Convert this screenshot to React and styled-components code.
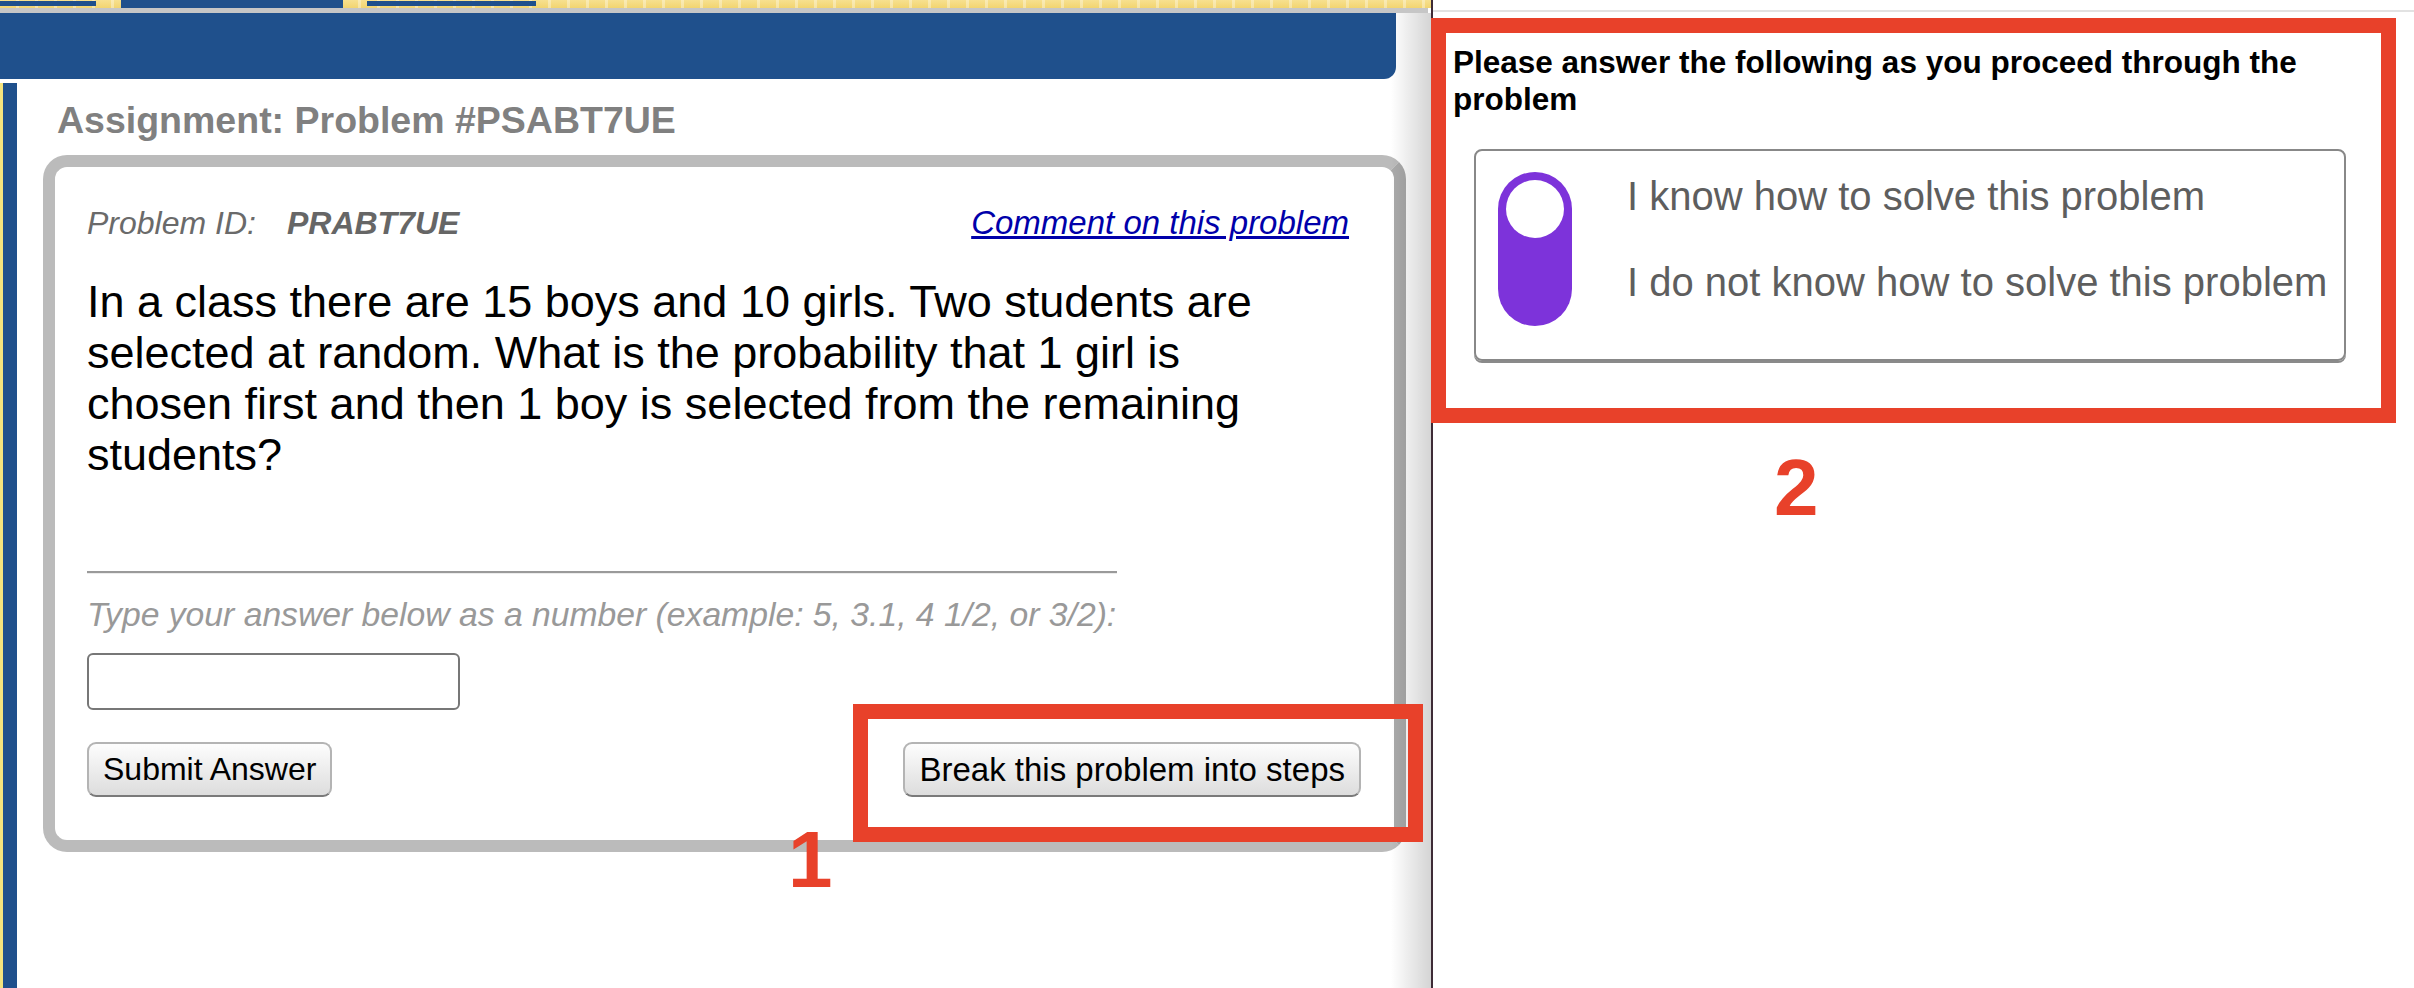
import React from "react";
import styled, { createGlobalStyle } from "styled-components";

const GlobalStyle = createGlobalStyle`
  html, body {
    margin: 0;
    padding: 0;
    background: #fff;
  }
  body {
    font-family: "Liberation Sans", Arial, sans-serif;
  }
`;

function App() {
  return (
    <>
      <GlobalStyle />
      <Page>
        <LeftPane>
          <TopStrip>
            <Tab $w={96} $h={5} $mt={1} $ml={0} />
            <Tab $w={222} $h={9} $mt={0} $ml={25} />
            <Tab $w={169} $h={5} $mt={1} $ml={24} />
          </TopStrip>
          <GrayRule />
          <Header />
          <Body>
            <SideBar />
            <Main>
              <AssignmentTitle>Assignment: Problem #PSABT7UE</AssignmentTitle>
              <Card>
                <TopRow>
                  <ProblemId>
                    Problem ID:<IdValue>PRABT7UE</IdValue>
                  </ProblemId>
                  <CommentLink href="#">Comment on this problem</CommentLink>
                </TopRow>
                <ProblemText>
                  In a class there are 15 boys and 10 girls. Two students are<br />
                  selected at random. What is the probability that 1 girl is<br />
                  chosen first and then 1 boy is selected from the remaining<br />
                  students?
                </ProblemText>
                <Rule />
                <Hint>
                  Type your answer below as a number (example: 5, 3.1, 4 1/2, or 3/2):
                </Hint>
                <AnswerInput type="text" />
                <ButtonRow>
                  <PlainButton $size={32}>Submit Answer</PlainButton>
                  <PlainButton $size={33}>Break this problem into steps</PlainButton>
                </ButtonRow>
                <MarkBox $left={798} $top={537} $w={570} $h={138} />
                <MarkNumber $left={733} $top={653}>1</MarkNumber>
              </Card>
            </Main>
          </Body>
        </LeftPane>

        <RightPane>
          <RightInner>
            <Prompt>
              Please answer the following as you proceed through the problem
            </Prompt>
            <OptionBox>
              <Toggle>
                <Knob />
              </Toggle>
              <Options>
                <Option>I know how to solve this problem</Option>
                <Option>I do not know how to solve this problem</Option>
              </Options>
            </OptionBox>
          </RightInner>
          <MarkBox $left={-2} $top={18} $w={965} $h={405} />
          <MarkNumber $left={341} $top={448}>2</MarkNumber>
        </RightPane>
      </Page>
    </>
  );
}

const Page = styled.div`
  display: flex;
  width: 2414px;
  height: 988px;
  overflow: hidden;
  background: #fff;
`;

const LeftPane = styled.div`
  position: relative;
  width: 1431px;
  flex-shrink: 0;
  display: flex;
  flex-direction: column;

  &::after {
    content: "";
    position: absolute;
    top: 13px;
    right: 0;
    bottom: 0;
    width: 40px;
    background: linear-gradient(to right, rgba(0, 0, 0, 0), rgba(0, 0, 0, 0.17));
    pointer-events: none;
  }
`;

const TopStrip = styled.div`
  display: flex;
  align-items: flex-start;
  height: 8px;
  background:
    repeating-linear-gradient(
      to right,
      rgba(255, 255, 255, 0) 0px,
      rgba(255, 255, 255, 0) 16px,
      rgba(255, 255, 255, 0.35) 16px,
      rgba(255, 255, 255, 0.35) 19px
    ),
    linear-gradient(to bottom, #f7e08f, #f2d470);
`;

const Tab = styled.div`
  width: ${(p) => p.$w}px;
  height: ${(p) => p.$h}px;
  margin-top: ${(p) => p.$mt}px;
  margin-left: ${(p) => p.$ml}px;
  background: #1f508c;
`;

const GrayRule = styled.div`
  width: 1428px;
  height: 5px;
  background: #c6c6c6;
`;

const Header = styled.div`
  width: 1396px;
  height: 66px;
  background: #1f508c;
  border-bottom-right-radius: 12px;
`;

const Body = styled.div`
  flex: 1;
  display: flex;
  margin-top: 4px;
`;

const SideBar = styled.div`
  width: 14px;
  border-left: 3px solid #f3e37e;
  background: #1f508c;
`;

const Main = styled.div`
  padding-left: 26px;
  display: flex;
  flex-direction: column;
  align-items: flex-start;
`;

const AssignmentTitle = styled.h1`
  margin: 15px 0 0 14px;
  font-family: "Liberation Sans", Arial, sans-serif;
  font-size: 37.5px;
  line-height: 44px;
  font-weight: 700;
  color: #808080;
`;

const Card = styled.div`
  position: relative;
  box-sizing: border-box;
  width: 1363px;
  margin-top: 13px;
  padding: 36px 33px 43px 32px;
  border: 12px solid #bbbbbb;
  border-right-color: #aaaaaa;
  border-radius: 24px;
  background: #fff;
  display: flex;
  flex-direction: column;
  align-items: flex-start;
`;

const TopRow = styled.div`
  align-self: stretch;
  display: flex;
  justify-content: space-between;
  align-items: baseline;
  padding-right: 12px;
`;

const ProblemId = styled.div`
  font-size: 32px;
  line-height: 40px;
  font-style: italic;
  color: #6a6a6a;
`;

const IdValue = styled.span`
  margin-left: 31px;
  font-weight: 700;
  color: #666;
`;

const CommentLink = styled.a`
  font-size: 33px;
  line-height: 40px;
  font-style: italic;
  color: #0000aa;
  text-decoration: underline;
`;

const ProblemText = styled.p`
  margin: 33px 0 0;
  font-size: 45px;
  line-height: 51px;
  color: #000;
  white-space: nowrap;
`;

const Rule = styled.div`
  width: 1030px;
  margin-top: 91px;
  border-top: 2px solid #9a9a9a;
  border-bottom: 1px solid #ececec;
`;

const Hint = styled.div`
  margin-top: 20px;
  font-size: 33.7px;
  line-height: 40px;
  font-style: italic;
  color: #999;
`;

const AnswerInput = styled.input`
  box-sizing: border-box;
  width: 373px;
  height: 57px;
  margin-top: 19px;
  border: 2px solid #777;
  border-radius: 6px;
  background: #fff;
  outline: none;
`;

const ButtonRow = styled.div`
  align-self: stretch;
  display: flex;
  justify-content: space-between;
  margin-top: 32px;
`;

const PlainButton = styled.button`
  box-sizing: border-box;
  height: 55px;
  padding: 0 14px;
  font-family: "Liberation Sans", Arial, sans-serif;
  font-size: ${(p) => p.$size}px;
  color: #000;
  border: 2px solid #b4b4b4;
  border-bottom-color: #7a7a7a;
  border-radius: 9px;
  background: linear-gradient(to bottom, #fdfdfd 0%, #ededed 50%, #dddddd 100%);
  cursor: pointer;
`;

const MarkBox = styled.div`
  position: absolute;
  left: ${(p) => p.$left}px;
  top: ${(p) => p.$top}px;
  width: ${(p) => p.$w}px;
  height: ${(p) => p.$h}px;
  box-sizing: border-box;
  border: 15px solid #e8412a;
  pointer-events: none;
  z-index: 2;
`;

const MarkNumber = styled.div`
  position: absolute;
  left: ${(p) => p.$left}px;
  top: ${(p) => p.$top}px;
  font-family: "Liberation Sans", Arial, sans-serif;
  font-size: 80px;
  line-height: 80px;
  font-weight: 700;
  color: #e8412a;
  z-index: 2;
`;

const RightPane = styled.div`
  position: relative;
  flex: 1;
  border-left: 2px solid #3e2b36;
  padding-top: 10px;
`;

const RightInner = styled.div`
  border-top: 2px solid #e2e2e2;
  padding: 32px 20px;
`;

const Prompt = styled.div`
  max-width: 900px;
  font-size: 31.5px;
  line-height: 37px;
  font-weight: 700;
  color: #000;
`;

const OptionBox = styled.div`
  box-sizing: border-box;
  width: 872px;
  height: 212px;
  margin: 31px 0 0 21px;
  padding: 21px 22px;
  display: flex;
  align-items: flex-start;
  gap: 55px;
  border: 2px solid #888;
  border-radius: 8px;
  box-shadow: 0 2px 0 #8a8a8a;
`;

const Toggle = styled.div`
  flex-shrink: 0;
  box-sizing: border-box;
  width: 74px;
  height: 154px;
  padding: 8px;
  border-radius: 37px;
  background: #7d33da;
`;

const Knob = styled.div`
  width: 58px;
  height: 58px;
  border-radius: 50%;
  background: #fff;
`;

const Options = styled.div`
  flex-shrink: 0;
  display: flex;
  flex-direction: column;
  gap: 38px;
  white-space: nowrap;
`;

const Option = styled.div`
  font-size: 40px;
  line-height: 48px;
  color: #5e5e5e;
`;

export default App;
